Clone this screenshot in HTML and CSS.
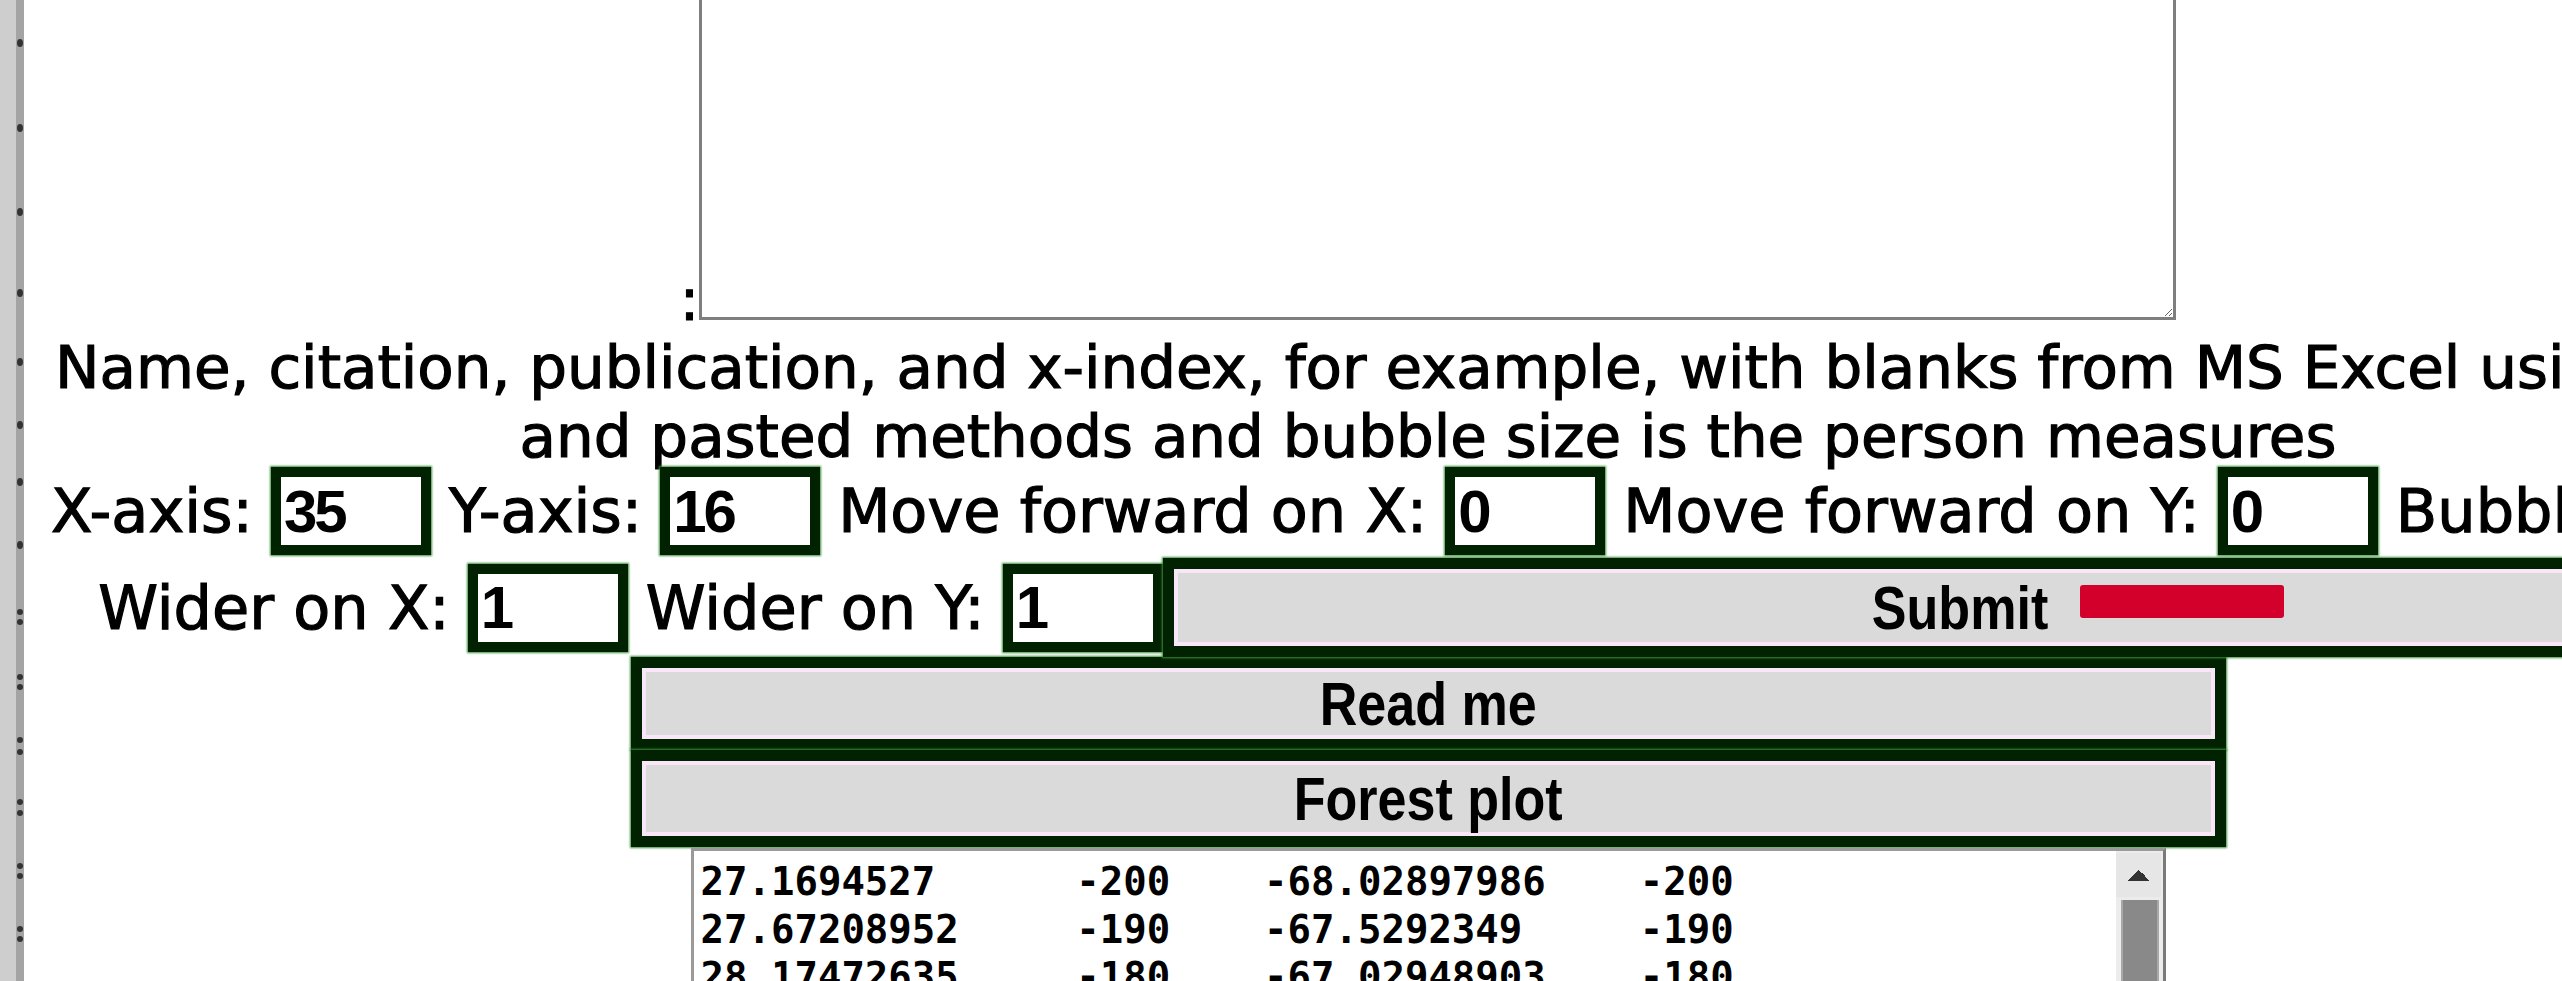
FILE: index.html
```html
<!DOCTYPE html>
<html>
<head>
  <title>Bubble plot</title>
  <link rel="stylesheet" href="styles.css">
</head>
<body>
  <div class="edge">
    <svg width="24" height="981" viewBox="0 0 24 981">
      <g fill="#333">
        <ellipse cx="20" cy="43" rx="3" ry="4"/>
        <ellipse cx="20" cy="128" rx="3" ry="4"/>
        <ellipse cx="20" cy="212" rx="3" ry="4"/>
        <ellipse cx="20" cy="293" rx="3" ry="4"/>
        <ellipse cx="20" cy="362" rx="3" ry="4"/>
        <ellipse cx="20" cy="425" rx="3" ry="4"/>
        <ellipse cx="20" cy="482" rx="3" ry="4"/>
        <ellipse cx="20" cy="545" rx="3" ry="4"/>
        <ellipse cx="20" cy="612" rx="3" ry="3"/>
        <ellipse cx="20" cy="622" rx="3" ry="3"/>
        <ellipse cx="20" cy="677" rx="3" ry="3"/>
        <ellipse cx="20" cy="687" rx="3" ry="3"/>
        <ellipse cx="20" cy="740" rx="3" ry="3"/>
        <ellipse cx="20" cy="752" rx="3" ry="3"/>
        <ellipse cx="20" cy="802" rx="3" ry="3"/>
        <ellipse cx="20" cy="813" rx="3" ry="3"/>
        <ellipse cx="20" cy="866" rx="3" ry="3"/>
        <ellipse cx="20" cy="876" rx="3" ry="3"/>
        <ellipse cx="20" cy="929" rx="3" ry="3"/>
        <ellipse cx="20" cy="939" rx="3" ry="3"/>
      </g>
    </svg>
  </div>

  <div class="page">
    <div class="paste">
      <span class="colon">:</span>
      <textarea class="paste-box" id="pasted"></textarea>
    </div>

    <p class="intro">Name, citation, publication, and x-index, for example, with blanks from MS Excel using copy<br>and pasted methods and bubble size is the person measures</p>

    <div class="controls first">
      <label for="xaxis">X-axis:</label>
      <input class="num" type="text" id="xaxis" value="35">
      <label for="yaxis">Y-axis:</label>
      <input class="num" type="text" id="yaxis" value="16">
      <label for="movex">Move forward on X:</label>
      <input class="num" type="text" id="movex" value="0">
      <label for="movey">Move forward on Y:</label>
      <input class="num" type="text" id="movey" value="0">
      <label for="bubble">Bubble:</label>
      <input class="num" type="text" id="bubble" value="1">
    </div>

    <div class="controls second">
      <label for="widex">Wider on X:</label>
      <input class="num" type="text" id="widex" value="1">
      <label for="widey">Wider on Y:</label>
      <span class="joined">
        <input class="num" type="text" id="widey" value="1">
        <button class="wide submit"><span class="caption">Submit</span><span class="busy"></span></button>
      </span>
    </div>

    <button class="wide readme"><span class="caption">Read me</span></button>
    <button class="wide forest"><span class="caption">Forest plot</span></button>

    <div class="output">
      <textarea class="data" id="output" readonly>27.1694527&#9;-200&#9;-68.02897986&#9;-200
27.67208952&#9;-190&#9;-67.5292349&#9;-190
28.17472635&#9;-180&#9;-67.02948903&#9;-180
28.67736317&#9;-170&#9;-66.52974316&#9;-170
29.18&#9;-160&#9;-66.02999729&#9;-160
29.68263683&#9;-150&#9;-65.53025142&#9;-150
30.18527365&#9;-140&#9;-65.03050555&#9;-140
30.68791048&#9;-130&#9;-64.53075968&#9;-130
31.1905473&#9;-120&#9;-64.03101381&#9;-120
31.69318413&#9;-110&#9;-63.53126794&#9;-110</textarea>
      <div class="vscroll">
        <span class="up"></span>
        <span class="thumb"></span>
      </div>
    </div>
  </div>
</body>
</html>
```

FILE: styles.css
```css
html, body {
  margin: 0;
  overflow: hidden;
  background-color: #fff;
}

body {
  display: flex;
  align-items: flex-start;
  font-family: "DejaVu Sans", sans-serif;
  color: #000;
}

.edge {
  flex: none;
  width: 24px;
  height: 981px;
  background: linear-gradient(to right, #cecece 0 16px, #a4a4a4 16px 24px);
}
.edge svg {
  display: block;
}

.page {
  flex: none;
  width: 2808px;
  margin-top: -100px;
  text-align: center;
}

/* paste box */
.paste {
  display: flex;
  justify-content: center;
  align-items: flex-end;
}
.colon {
  font-size: 59px;
  line-height: 0.7;
  -webkit-text-stroke: 1px #000;
}
.paste-box {
  width: 1477px;
  height: 420px;
  box-sizing: border-box;
  margin: 0;
  padding: 0;
  border: 3px solid #7f7f7f;
}

.intro {
  margin: 14px 0 0;
  font-size: 59.5px;
  line-height: 68.5px;
  white-space: nowrap;
  -webkit-text-stroke: 1.2px #000;
}

/* inputs */
.controls {
  display: flex;
  justify-content: center;
  align-items: center;
  column-gap: 18px;
  font-size: 60.5px;
  white-space: nowrap;
  -webkit-text-stroke: 1.2px #000;
}
.controls.first {
  margin-top: -4px;
  height: 88px;
}
.controls.second {
  margin-top: 3px;
  height: 99px;
}
.joined {
  display: flex;
  align-items: center;
}

.num {
  width: 160px;
  height: 88px;
  box-sizing: border-box;
  margin: 0;
  padding: 0 3px;
  border: 10px solid #012201;
  box-shadow: 0 0 2px 1px #3b8f3b;
  outline: none;
  font: bold 60px "Liberation Sans", sans-serif;
  letter-spacing: -3px;
  color: #000;
  -webkit-text-stroke: 0;
}

/* buttons */
.wide {
  display: block;
  width: 1595px;
  height: 93px;
  box-sizing: border-box;
  margin: 0 auto;
  padding: 0;
  border: 11px solid #012201;
  box-shadow: inset 0 0 0 4px #f9e7f9, 0 0 2px 1px #3b8f3b;
  background-color: #dadada;
  font: bold 62px "Liberation Sans", sans-serif;
  color: #000;
  -webkit-text-stroke: 0;
}
.caption {
  display: inline-block;
  transform: scaleX(0.84);
}
.submit {
  position: relative;
  height: 99px;
  margin: 0;
}
.busy {
  position: absolute;
  left: calc(50% + 120px);
  top: 16px;
  width: 204px;
  height: 33px;
  border-radius: 3px;
  background-color: #d3002c;
}
.forest {
  height: 97px;
}

/* output */
.output {
  display: flex;
  width: 1475px;
  height: 330px;
  box-sizing: border-box;
  margin: 1px auto 0;
  border: 3px solid #9a9a9a;
  border-right-color: #7a7a7a;
  text-align: left;
}
.data {
  flex: 1;
  margin: 0;
  padding: 7px 0 0 7px;
  border: 0;
  font: bold 39px "DejaVu Sans Mono", monospace;
  line-height: 47.5px;
  white-space: pre;
  resize: none;
  overflow: hidden;
  outline: none;
}
.vscroll {
  flex: none;
  width: 47px;
  display: flex;
  flex-direction: column;
  padding-top: 2px;
  background-color: #ececec;
}
.up {
  height: 44px;
  margin-right: 2px;
  background:
    linear-gradient(to top left, #333 50%, transparent 50%) 12px 17px / 11px 11px no-repeat,
    linear-gradient(to top right, #333 50%, transparent 50%) 23px 17px / 11px 11px no-repeat,
    #e6e6e6;
}
.thumb {
  height: 240px;
  margin: 3px 4px 0 5px;
  background-color: #898989;
  border-left: 2px solid #a8a8a8;
  border-right: 2px solid #a8a8a8;
}
```
